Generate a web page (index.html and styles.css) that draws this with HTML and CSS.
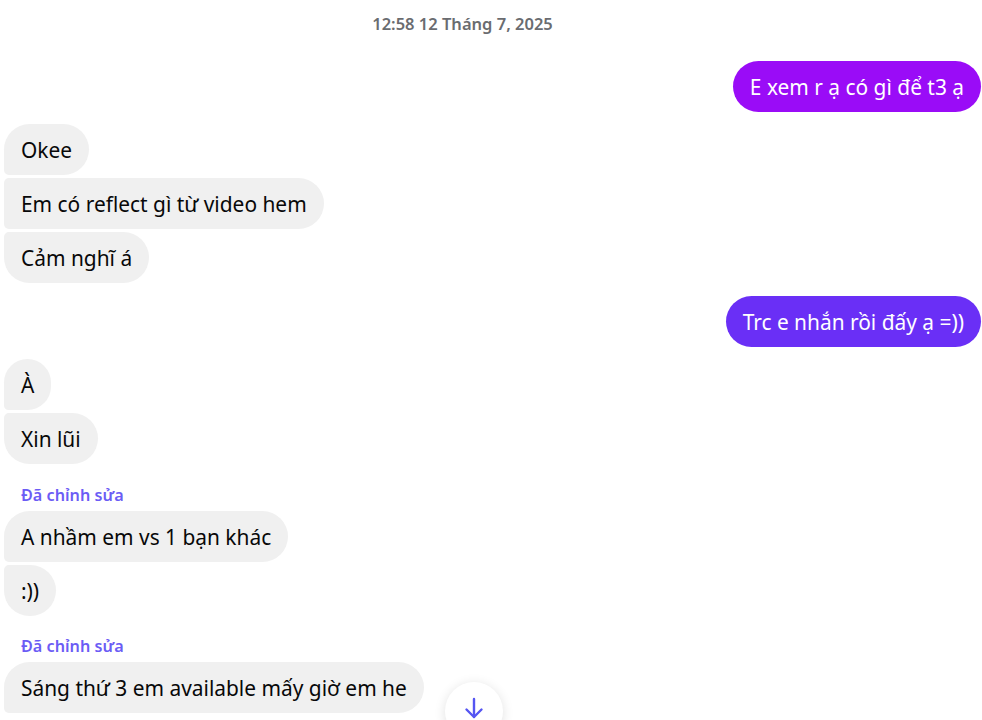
FILE: index.html
```html
<!DOCTYPE html>
<html lang="vi">
<head>
<meta charset="utf-8">
<link rel="stylesheet" href="styles.css">
</head>
<body>
<div class="chat">
  <div class="stamp">12:58 12 Tháng 7, 2025</div>

  <div class="row out"><div class="bubble out1 solo">E xem r ạ có gì để t3 ạ</div></div>

  <div class="group">
    <div class="row"><div class="bubble in first">Okee</div></div>
    <div class="row"><div class="bubble in mid">Em có reflect gì từ video hem</div></div>
    <div class="row"><div class="bubble in last">Cảm nghĩ á</div></div>
  </div>

  <div class="row out"><div class="bubble out2 solo">Trc e nhắn rồi đấy ạ =))</div></div>

  <div class="group">
    <div class="row"><div class="bubble in first">À</div></div>
    <div class="row"><div class="bubble in last">Xin lũi</div></div>
  </div>

  <div class="edited">Đã chỉnh sửa</div>
  <div class="group tight">
    <div class="row"><div class="bubble in first">A nhầm em vs 1 bạn khác</div></div>
    <div class="row"><div class="bubble in last">:))</div></div>
  </div>

  <div class="edited second">Đã chỉnh sửa</div>
  <div class="group tight">
    <div class="row"><div class="bubble in first">Sáng thứ 3 em available mấy giờ em he</div></div>
  </div>
</div>

<button class="scroll-down" aria-label="Cuộn xuống">
  <svg width="24" height="24" viewBox="0 0 24 24" fill="none" stroke="currentColor" stroke-width="2.4" stroke-linecap="round" stroke-linejoin="round">
    <path d="M12 3v18"/>
    <path d="M4.5 13.5L12 21l7.5-7.5"/>
  </svg>
</button>
</body>
</html>
```

FILE: styles.css
```css
html, body {
  margin: 0;
  padding: 0;
  background: #ffffff;
  height: 100%;
  overflow: hidden;
}

body {
  font-family: "Noto Sans", "Open Sans", sans-serif;
  color: #080809;
  position: relative;
}

.chat {
  display: flex;
  flex-direction: column;
  padding: 0 1px 0 4px;
}

.stamp {
  text-align: center;
  font-size: 16.5px;
  font-weight: 600;
  line-height: 20px;
  color: #6a6c70;
  padding: 14px 60px 0 0;
  margin-bottom: 27px;
}

.row {
  display: flex;
}

.row.out {
  justify-content: flex-end;
}

.group {
  display: flex;
  flex-direction: column;
  gap: 3px;
  margin: 12px 0 13px;
}

.group.tight {
  margin-top: 6px;
}

.bubble {
  font-size: 20.9px;
  line-height: 27px;
  padding: 13px 17px 11px;
  border-radius: 26px;
  white-space: nowrap;
}

.bubble.in {
  background: #f0f0f0;
  color: #080809;
}

.bubble.in.first {
  border-bottom-left-radius: 5px;
}

.bubble.in.mid {
  border-top-left-radius: 5px;
  border-bottom-left-radius: 5px;
}

.bubble.in.last {
  border-top-left-radius: 5px;
}

.bubble.out1 {
  background: #9a0cf7;
  color: #ffffff;
}

.bubble.out2 {
  background: #6a2ff6;
  color: #ffffff;
}

.edited {
  font-size: 16.2px;
  font-weight: 600;
  line-height: 20px;
  color: #6b5cf5;
  padding-left: 17px;
  margin-top: 8px;
}

.edited.second {
  margin-top: 7px;
}

.scroll-down {
  position: absolute;
  left: 445px;
  top: 682px;
  width: 58px;
  height: 58px;
  border-radius: 50%;
  border: none;
  background: #ffffff;
  box-shadow: 0 2px 12px rgba(0, 0, 0, 0.12);
  color: #5555f2;
  display: flex;
  align-items: flex-start;
  justify-content: center;
  padding: 14px 0 0 0;
}
```
